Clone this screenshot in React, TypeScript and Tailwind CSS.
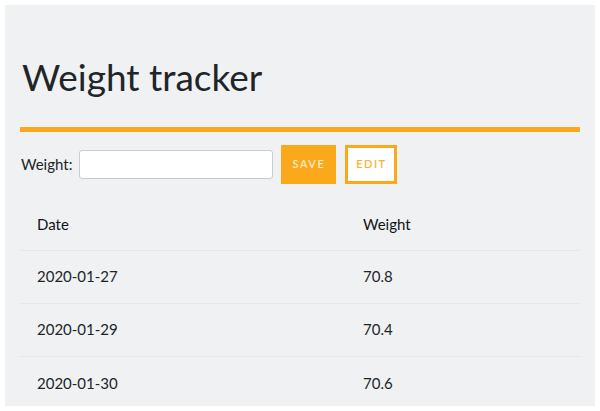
export default function App() {
  const rows = [
    ["2020-01-27", "70.8"],
    ["2020-01-29", "70.4"],
    ["2020-01-30", "70.6"],
  ];
  return (
    <div className="w-[600px] h-[411px] bg-white p-[5px] overflow-hidden" style={{ fontFamily: "Lato, 'Noto Sans', sans-serif" }}>
      <div className="h-[401px] bg-[#f0f1f2] px-[15px] text-[#212529] overflow-hidden">
        <h1 className="pt-[48px] text-[37px] leading-[48px] font-normal pl-[2px]">Weight tracker</h1>
        <div className="mt-[26px] h-[5px] bg-[#f9a91b]" />
        <div className="mt-[13px] flex items-center h-[39px]">
          <label className="text-[15px] mr-[7px] pl-[1px]">Weight:</label>
          <input className="w-[194px] h-[29px] bg-white border border-[#c9ccd0] rounded-[3px] outline-none" />
          <button className="ml-[8px] w-[55px] h-[39px] bg-[#f9a91b] text-[#fde9c4] text-[11px] font-semibold tracking-[1.5px]">SAVE</button>
          <button className="ml-[9px] w-[52px] h-[39px] bg-white border-[3px] border-[#f9a91b] text-[#f9b233] text-[11px] font-semibold tracking-[1.5px]">EDIT</button>
        </div>
        <table className="mt-[14px] w-full text-[15px] border-collapse">
          <thead>
            <tr className="border-b border-[#e6e7e9]">
              <th className="text-left font-normal text-[#111418] pl-[17px] h-[52px] w-[343px]">Date</th>
              <th className="text-left font-normal text-[#111418]">Weight</th>
            </tr>
          </thead>
          <tbody>
            {rows.map(([d, w], i) => (
              <tr key={d} className={i < rows.length - 1 ? "border-b border-[#e6e7e9]" : ""}>
                <td className="pl-[17px] h-[53px]">{d}</td>
                <td>{w}</td>
              </tr>
            ))}
          </tbody>
        </table>
      </div>
    </div>
  );
}
